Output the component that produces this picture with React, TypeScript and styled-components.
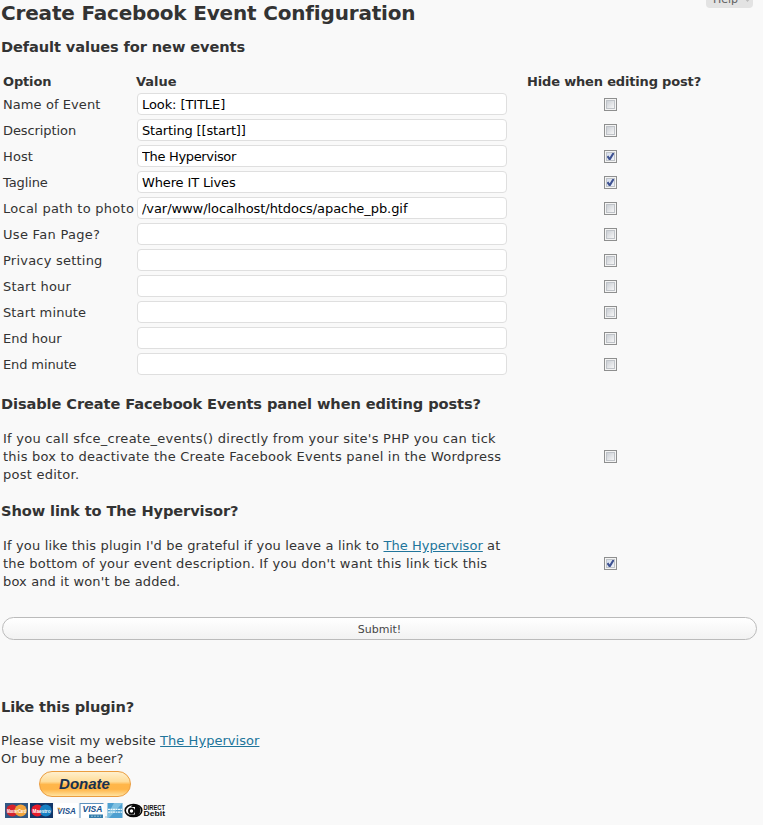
import React, { useState } from "react";
import styled, { createGlobalStyle, css } from "styled-components";

const GlobalStyle = createGlobalStyle`
  html, body { margin: 0; padding: 0; background: #f9f9f9; overflow: hidden; }
  *, *::before, *::after { box-sizing: border-box; }
`;

const Page = styled.main`
  position: relative;
  width: 763px;
  height: 825px;
  overflow: hidden;
  padding: 1px 6px 0 1px;
  background: #f9f9f9;
  color: #333;
  font: 13px/18px Verdana, "DejaVu Sans", sans-serif;
`;

const HelpTab = styled.button`
  position: absolute;
  top: -14px;
  right: 10px;
  display: flex;
  align-items: center;
  gap: 6px;
  width: 47px;
  height: 22px;
  padding: 6px 0 0 7px;
  border: 0;
  border-radius: 0 0 4px 4px;
  background: #e3e3e3;
  color: #606060;
  font: 11px/16px Verdana, "DejaVu Sans", sans-serif;
  white-space: nowrap;
`;

const Title = styled.h1`
  margin: 0;
  height: 24px;
  font-size: 20px;
  line-height: 24px;
  font-weight: bold;
  white-space: nowrap;
  letter-spacing: -0.18px;
`;

const Heading = styled.h2<{ $top: number }>`
  margin: ${(p) => p.$top}px 0 0;
  height: 20px;
  font-size: 14.6px;
  line-height: 20px;
  font-weight: bold;
  white-space: nowrap;
  letter-spacing: -0.1px;
`;

const Row = styled.div`
  display: grid;
  grid-template-columns: 136px 370px 1fr;
  align-items: center;
  height: 26px;
`;

const HeaderRow = styled(Row)`
  height: 20px;
  margin-top: 15px;
  margin-bottom: -1px;
  font-weight: bold;
`;

const Label = styled.label<{ $spacing: number }>`
  padding: 1px 0 0 2px;
  white-space: nowrap;
  letter-spacing: ${(p) => p.$spacing}px;
`;

const OptionHeader = styled.span`
  padding-left: 2px;
  letter-spacing: -0.15px;
`;

const HideHeader = styled.span`
  padding-left: 20px;
  white-space: nowrap;
  letter-spacing: -0.17px;
`;

const ValueHeader = styled.span`
  margin-left: -1px;
`;

const TextInput = styled.input<{ $spacing: number }>`
  width: 370px;
  height: 22px;
  margin: 0;
  padding: 0 4px;
  border: 1px solid #dfdfdf;
  border-radius: 4px;
  outline: 0;
  background: #fff;
  color: #000;
  font: 13px/18px Verdana, "DejaVu Sans", sans-serif;
  letter-spacing: ${(p) => p.$spacing}px;
`;

const Check = styled.input.attrs({ type: "checkbox" })<{ $raised?: boolean }>`
  appearance: none;
  display: grid;
  width: 13px;
  height: 13px;
  margin: 0 0 ${(p) => (p.$raised ? 2 : 0)}px 97px;
  border: 1px solid #8e8f8f;
  background: linear-gradient(135deg, #cbcfd5, #f6f6f6) content-box, #f4f4f4;
  padding: 2px;
  box-shadow: inset 0 0 0 1px #f4f4f4, inset 0 0 0 2px #bfc3c8;
  &:checked {
    background: url("data:image/svg+xml,%3Csvg xmlns='http://www.w3.org/2000/svg' viewBox='0 0 11 11'%3E%3Cpath d='M2.5 5.2 4.7 8.4 8.7 1.8' fill='none' stroke='%233e5292' stroke-width='2.1'/%3E%3C/svg%3E") border-box center / 11px 11px no-repeat, linear-gradient(135deg, #cdd7e8, #f7f8fc);
  }
`;

const TextRow = styled.div<{ $top: number }>`
  display: grid;
  grid-template-columns: 506px 1fr;
  align-items: center;
  margin-top: ${(p) => p.$top}px;
`;

const Copy = styled.p<{ $inset?: boolean }>`
  margin: 0;
  ${(p) => p.$inset && css`padding-left: 2px;`}
`;

const Line = styled.span<{ $spacing: number }>`
  display: block;
  height: 18px;
  white-space: nowrap;
  letter-spacing: ${(p) => p.$spacing}px;
`;

const Link = styled.a`
  color: #21759b;
  text-decoration: underline;
  letter-spacing: 0.04px;
`;

const Submit = styled.button`
  display: block;
  width: 755px;
  height: 23px;
  margin: 26px 0 0 1px;
  padding: 2px 0 0;
  border: 1px solid #bbb;
  border-radius: 12px;
  background: linear-gradient(#fff, #f2f2f2);
  color: #464646;
  font: 11px/19px Verdana, "DejaVu Sans", sans-serif;
`;

const Donate = styled.button`
  display: block;
  width: 92px;
  height: 26px;
  margin: 3px 0 0 38px;
  padding: 0 1px 0 0;
  border: 1px solid #eb9d3f;
  border-radius: 13px;
  background: linear-gradient(#fff0cd 0, #ffdc98 40%, #ffb64a 52%, #ffb548 72%, #ffe3a0 100%);
  color: #18314f;
  font: italic bold 15px/22px "Liberation Sans", Arial, sans-serif;
`;

const Cards = styled.svg`
  display: block;
  margin: 6px 0 0 4px;
`;

function PaymentCards() {
  return (
    <Cards width="166" height="15" viewBox="0 0 166 15" fontFamily="Liberation Sans, Arial, sans-serif" fontWeight="bold" aria-label="Accepted cards">
      <rect width="23" height="15" fill="#315784" />
      <circle cx="7.3" cy="7.5" r="6" fill="#d6242d" />
      <circle cx="15.7" cy="7.5" r="6" fill="#f2a43c" />
      <text x="2" y="9.7" fontSize="5.5" fill="#fff" textLength="19" lengthAdjust="spacingAndGlyphs">MasterCard</text>
      <rect x="25" width="23" height="15" fill="#123568" />
      <circle cx="32.3" cy="7.5" r="6" fill="#e51c2b" />
      <circle cx="40.7" cy="7.5" r="6" fill="#1680c4" />
      <text x="27.5" y="9.7" fontSize="6" fill="#fff" textLength="18" lengthAdjust="spacingAndGlyphs">Maestro</text>
      <rect x="50" width="23" height="15" fill="#fff" />
      <text x="52" y="11" fontSize="9" fontStyle="italic" fill="#22508c" textLength="19" lengthAdjust="spacingAndGlyphs">VISA</text>
      <path d="M52 4.8h3l1 3z" fill="#e8a536" />
      <rect x="74.5" width="24" height="15" fill="#fff" />
      <path d="M74.5 0h24v1h-23v14h-1z" fill="#5c91bd" />
      <text x="77.5" y="9.4" fontSize="9.5" fontStyle="italic" fill="#16528d" textLength="20" lengthAdjust="spacingAndGlyphs">VISA</text>
      <path d="M84 11.5h14V15H84z" fill="#347dac" />
      <path d="M86 13.2h10" stroke="#a9d1df" strokeWidth=".8" strokeDasharray="2 1" />
      <path d="M100.5 14h1" stroke="#347dac" />
      <rect x="102.5" width="15" height="15" fill="#4d9fd0" />
      <path d="M102.5 11.8 109 0h8.5L104 15h-1.5z" fill="#7fc0e0" />
      <path d="M103 6.3h14M103 9.2h14" stroke="#eff9fb" strokeWidth="1.3" strokeDasharray="2 .5" />
      <ellipse cx="128.5" cy="7.5" rx="8.3" ry="6" fill="#fff" stroke="#080808" strokeWidth="1.6" />
      <path d="M128 1.5c10-.5 10 12 0 12-1 0-3-1-4-2h6V4h-4z" fill="#080808" />
      <circle cx="126.5" cy="8" r="2.6" fill="#fff" stroke="#080808" strokeWidth="1.8" />
      <text x="138.5" y="7" fontSize="7" fill="#111" textLength="21.5" lengthAdjust="spacingAndGlyphs">DIRECT</text>
      <text x="138.5" y="13" fontSize="7" fill="#111" textLength="21.5" lengthAdjust="spacingAndGlyphs">Debit</text>
    </Cards>
  );
}

const options = [
  { label: "Name of Event", spacing: 0.08, value: "Look: [TITLE]", valueSpacing: -0.09, hidden: false },
  { label: "Description", spacing: -0.09, value: "Starting [[start]]", valueSpacing: -0.16, hidden: false },
  { label: "Host", spacing: 0.1, value: "The Hypervisor", valueSpacing: -0.34, hidden: true },
  { label: "Tagline", spacing: -0.1, value: "Where IT Lives", valueSpacing: -0.14, hidden: true },
  { label: "Local path to photo", spacing: 0.26, value: "/var/www/localhost/htdocs/apache_pb.gif", valueSpacing: -0.06, hidden: false },
  { label: "Use Fan Page?", spacing: 0.3, value: "", valueSpacing: 0, hidden: false },
  { label: "Privacy setting", spacing: 0.22, value: "", valueSpacing: 0, hidden: false },
  { label: "Start hour", spacing: 0.25, value: "", valueSpacing: 0, hidden: false },
  { label: "Start minute", spacing: 0.12, value: "", valueSpacing: 0, hidden: false },
  { label: "End hour", spacing: 0, value: "", valueSpacing: 0, hidden: false },
  { label: "End minute", spacing: -0.12, value: "", valueSpacing: 0, hidden: false },
];

function OptionRow({ label, spacing, value, valueSpacing, hidden }: (typeof options)[number]) {
  const [text, setText] = useState(value);
  return (
    <Row>
      <Label $spacing={spacing}>{label}</Label>
      <TextInput $spacing={valueSpacing} aria-label={label} value={text} onChange={(e) => setText(e.target.value)} />
      <Check aria-label={`Hide ${label}`} defaultChecked={hidden} />
    </Row>
  );
}

export default function App() {
  return (
    <>
      <GlobalStyle />
      <Page>
        <HelpTab><span>Help</span><svg width="7" height="4" viewBox="0 0 7 4"><path d="M0 0h7L3.5 4z" fill="#bbb" /></svg></HelpTab>
        <Title>Create Facebook Event Configuration</Title>
        <Heading $top={12}>Default values for new events</Heading>
        <HeaderRow>
          <OptionHeader>Option</OptionHeader>
          <ValueHeader>Value</ValueHeader>
          <HideHeader>Hide when editing post?</HideHeader>
        </HeaderRow>
        {options.map((option) => <OptionRow key={option.label} {...option} />)}
        <Heading $top={17}>Disable Create Facebook Events panel when editing posts?</Heading>
        <TextRow $top={16}>
          <Copy $inset>
            <Line $spacing={0.27}>If you call sfce_create_events() directly from your site's PHP you can tick</Line>
            <Line $spacing={0.23}>this box to deactivate the Create Facebook Events panel in the Wordpress</Line>
            <Line $spacing={0.24}>post editor.</Line>
          </Copy>
          <Check $raised aria-label="Disable panel" />
        </TextRow>
        <Heading $top={17}>Show link to The Hypervisor?</Heading>
        <TextRow $top={16}>
          <Copy $inset>
            <Line $spacing={0.155}>If you like this plugin I'd be grateful if you leave a link to <Link>The Hypervisor</Link> at</Line>
            <Line $spacing={0.21}>the bottom of your event description. If you don't want this link tick this</Line>
            <Line $spacing={0.13}>box and it won't be added.</Line>
          </Copy>
          <Check $raised aria-label="Remove link" defaultChecked />
        </TextRow>
        <Submit>Submit!</Submit>
        <Heading $top={57}>Like this plugin?</Heading>
        <TextRow $top={15}>
          <Copy>
            <Line $spacing={0.12}>Please visit my website <Link>The Hypervisor</Link></Line>
            <Line $spacing={0.06}>Or buy me a beer?</Line>
          </Copy>
        </TextRow>
        <Donate>Donate</Donate>
        <PaymentCards />
      </Page>
    </>
  );
}
